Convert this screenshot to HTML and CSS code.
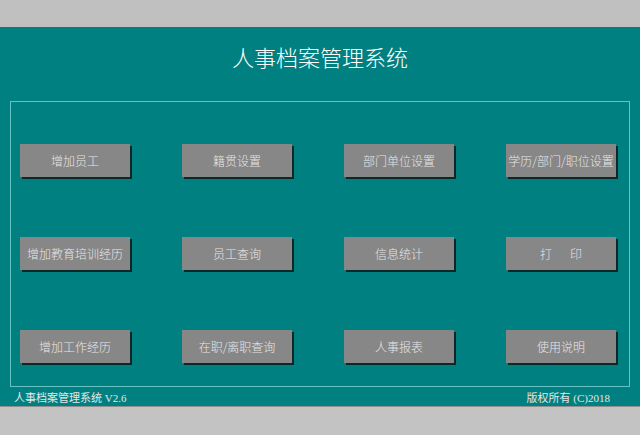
FILE: index.html
```html
<!DOCTYPE html>
<html lang="zh-CN">
<head>
<meta charset="utf-8">
<title>人事档案管理系统</title>
<link rel="stylesheet" href="styles.css">
</head>
<body>
<div class="topbar"></div>
<main class="main">
  <h1 class="title">人事档案管理系统</h1>
  <section class="frame">
    <div class="grid">
      <div class="btn">增加员工</div>
      <div class="btn">籍贯设置</div>
      <div class="btn">部门单位设置</div>
      <div class="btn">学历/部门/职位设置</div>
      <div class="btn">增加教育培训经历</div>
      <div class="btn">员工查询</div>
      <div class="btn">信息统计</div>
      <div class="btn">打&emsp;&ensp;印</div>
      <div class="btn">增加工作经历</div>
      <div class="btn">在职/离职查询</div>
      <div class="btn">人事报表</div>
      <div class="btn">使用说明</div>
    </div>
  </section>
  <footer class="status">
    <span>人事档案管理系统 V2.6</span>
    <span>版权所有 (C)2018</span>
  </footer>
</main>
<div class="bottombar"></div>
</body>
</html>
```

FILE: styles.css
```css
html, body {
  margin: 0;
  padding: 0;
}
body {
  width: 640px;
  height: 435px;
  overflow: hidden;
  background: #c0c0c0;
  font-family: "Liberation Sans", "Noto Sans CJK SC", sans-serif;
}
.topbar {
  height: 27px;
  background: #c0c0c0;
}
.main {
  height: 379px;
  box-sizing: border-box;
  background: #008080;
  padding: 0 10px;
  display: flex;
  flex-direction: column;
}
.title {
  margin: 0;
  height: 74px;
  box-sizing: border-box;
  padding-top: 16px;
  line-height: 26px;
  text-align: center;
  font-family: "Noto Sans CJK SC", sans-serif;
  font-weight: 300;
  font-size: 22px;
  color: #ffffff;
}
.frame {
  height: 287px;
  box-sizing: border-box;
  border: 1px solid #66c2c2;
  padding: 42px 0 0 9px;
}
.grid {
  display: grid;
  grid-template-columns: repeat(4, 110px);
  grid-auto-rows: 33px;
  column-gap: 52px;
  row-gap: 60px;
}
.btn {
  display: flex;
  align-items: center;
  justify-content: center;
  white-space: nowrap;
  background: #878787;
  color: #e6e6e6;
  font-family: "Noto Sans CJK SC", sans-serif;
  font-weight: 300;
  font-size: 12px;
  box-shadow: 2px 2px 0 #0e2727;
}
.status {
  height: 19px;
  display: flex;
  justify-content: space-between;
  align-items: center;
  padding: 0 20px 0 4px;
  font-family: "Liberation Serif", "Noto Sans CJK SC", serif;
  font-size: 11px;
  color: #e6e6e6;
}
.bottombar {
  height: 29px;
  box-sizing: border-box;
  border-top: 1px solid #8f8f8f;
  background: #c3c3c3;
}
```
